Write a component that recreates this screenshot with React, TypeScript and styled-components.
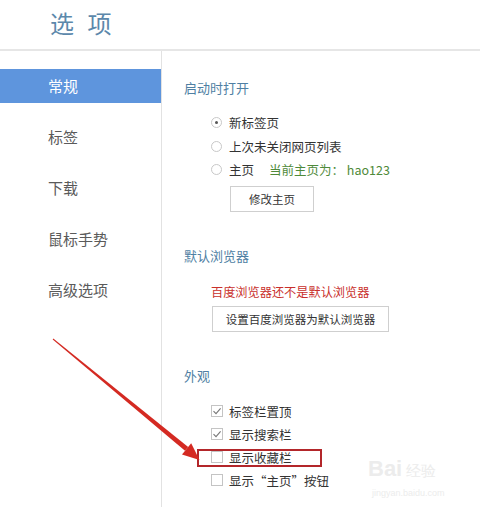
import styled, { createGlobalStyle } from "styled-components";

const GlobalStyle = createGlobalStyle`
  html, body {
    margin: 0;
    padding: 0;
    background: #fff;
    overflow: hidden;
  }
  body {
    font-family: "Noto Sans CJK SC", "Noto Sans", sans-serif;
    color: #333;
  }
`;

const menu = ["常规", "标签", "下载", "鼠标手势", "高级选项"];

const CheckMark = () => (
  <svg width="10" height="10" viewBox="0 0 10 10">
    <path d="M1.5 5.2 L4 7.6 L8.6 2.4" fill="none" stroke="#777" strokeWidth="1.1" />
  </svg>
);

const App = () => {
  return (
    <Page>
      <GlobalStyle />
      <Header>
        <Title>选 项</Title>
      </Header>
      <Body>
        <Sidebar>
          {menu.map((m, i) => (
            <MenuItem key={m} $active={i === 0}>
              {m}
            </MenuItem>
          ))}
        </Sidebar>
        <Content>
          <SectionTitle>启动时打开</SectionTitle>
          <OptionList>
            <Row>
              <Radio $checked />
              <Label>新标签页</Label>
            </Row>
            <Row>
              <Radio />
              <Label>上次未关闭网页列表</Label>
            </Row>
            <Row>
              <Radio />
              <Label>主页</Label>
              <Hint>当前主页为： hao123</Hint>
            </Row>
            <Button $width={84} $indent={19}>
              修改主页
            </Button>
          </OptionList>

          <SectionTitle $top={34}>默认浏览器</SectionTitle>
          <OptionList $top={16}>
            <Warning>百度浏览器还不是默认浏览器</Warning>
            <Button $width={177} $indent={1}>
              设置百度浏览器为默认浏览器
            </Button>
          </OptionList>

          <SectionTitle $top={34}>外观</SectionTitle>
          <OptionList $top={14}>
            <CheckRow>
              <Checkbox>
                <CheckMark />
              </Checkbox>
              <Label>标签栏置顶</Label>
            </CheckRow>
            <CheckRow>
              <Checkbox>
                <CheckMark />
              </Checkbox>
              <Label>显示搜索栏</Label>
            </CheckRow>
            <CheckRow>
              <Checkbox />
              <Label>显示收藏栏</Label>
            </CheckRow>
            <CheckRow>
              <Checkbox />
              <Label>显示“主页”按钮</Label>
            </CheckRow>
          </OptionList>
        </Content>
      </Body>

      <Highlight />
      <Arrow width="480" height="507" viewBox="0 0 480 507">
        <polygon points="52.7,339.4 185,450.7 188.2,446.9 53.3,338.6" fill="#d42a22" />
        <polygon points="199.5,460 182,454.4 191.2,443.2" fill="#d42a22" />
      </Arrow>
      <Watermark>
        <span className="logo">Bai</span>
        <span className="jy">经验</span>
        <div className="url">jingyan.baidu.com</div>
      </Watermark>
    </Page>
  );
};

const Page = styled.div`
  position: relative;
  width: 480px;
  height: 507px;
  overflow: hidden;
`;

const Header = styled.div`
  height: 51px;
  border-bottom: 2px solid #e6e6e6;
  display: flex;
  align-items: center;
  padding-left: 50px;
  box-sizing: border-box;
`;

const Title = styled.div`
  font-size: 24px;
  color: #5c88ab;
  letter-spacing: 2px;
  word-spacing: 4px;
  margin-top: -4px;
  white-space: pre;
`;

const Body = styled.div`
  display: flex;
  height: 456px;
`;

const Sidebar = styled.div`
  width: 161px;
  border-right: 1px solid #e2e2e2;
  padding-top: 18px;
  display: flex;
  flex-direction: column;
  gap: 17px;
`;

const MenuItem = styled.div<{ $active?: boolean }>`
  height: 34px;
  line-height: 34px;
  padding-left: 48px;
  font-size: 15px;
  color: ${({ $active }) => ($active ? "#fff" : "#5a5a5a")};
  background: ${({ $active }) => ($active ? "#5e95dd" : "transparent")};
`;

const Content = styled.div`
  flex: 1;
  padding: 27px 0 0 22px;
  font-size: 12px;
`;

const SectionTitle = styled.div<{ $top?: number }>`
  margin-top: ${({ $top }) => $top ?? 0}px;
  height: 20px;
  line-height: 20px;
  font-size: 13px;
  color: #4f7fa3;
`;

const OptionList = styled.div<{ $top?: number }>`
  margin-top: ${({ $top }) => $top ?? 13}px;
  padding-left: 27px;
  display: flex;
  flex-direction: column;
`;

const Row = styled.div`
  display: flex;
  align-items: center;
  height: 23.5px;
  gap: 7px;
`;

const CheckRow = styled.div`
  display: flex;
  align-items: center;
  height: 23px;
  gap: 6px;
`;

const Radio = styled.span<{ $checked?: boolean }>`
  width: 11px;
  height: 11px;
  border: 1px solid #c8c8c8;
  border-radius: 50%;
  box-sizing: border-box;
  display: flex;
  align-items: center;
  justify-content: center;
  &::after {
    content: "";
    width: 3px;
    height: 3px;
    border-radius: 50%;
    background: ${({ $checked }) => ($checked ? "#555" : "transparent")};
  }
`;

const Checkbox = styled.span`
  width: 12px;
  height: 12px;
  border: 1px solid #c4c4c4;
  box-sizing: border-box;
  display: flex;
  align-items: center;
  justify-content: center;
`;

const Label = styled.span`
  color: #333;
  font-size: 12.5px;
`;

const Hint = styled.span`
  color: #4f8a3a;
  margin-left: 8px;
  font-size: 12.5px;
`;

const Warning = styled.div`
  color: #c9302c;
  font-size: 12.2px;
  height: 20px;
  line-height: 20px;
`;

const Button = styled.div<{ $width: number; $indent: number }>`
  width: ${({ $width }) => $width}px;
  height: 26px;
  margin-top: 4px;
  margin-left: ${({ $indent }) => $indent}px;
  border: 1px solid #cfcfcf;
  box-sizing: border-box;
  display: flex;
  align-items: center;
  justify-content: center;
  font-size: 11.5px;
  color: #333;
  background: #fff;
`;

const Highlight = styled.div`
  position: absolute;
  left: 197px;
  top: 449px;
  width: 125px;
  height: 18px;
  border: 2.5px solid #b3262a;
  box-sizing: border-box;
`;

const Arrow = styled.svg`
  position: absolute;
  left: 0;
  top: 0;
  pointer-events: none;
`;

const Watermark = styled.div`
  position: absolute;
  left: 368px;
  top: 456px;
  color: #ececec;
  font-family: "Liberation Sans", sans-serif;
  .logo {
    font-size: 22px;
    font-weight: bold;
  }
  .jy {
    font-size: 15px;
    margin-left: 4px;
  }
  .url {
    font-size: 9px;
    margin-top: 6px;
    margin-left: 4px;
  }
`;

export default App;
